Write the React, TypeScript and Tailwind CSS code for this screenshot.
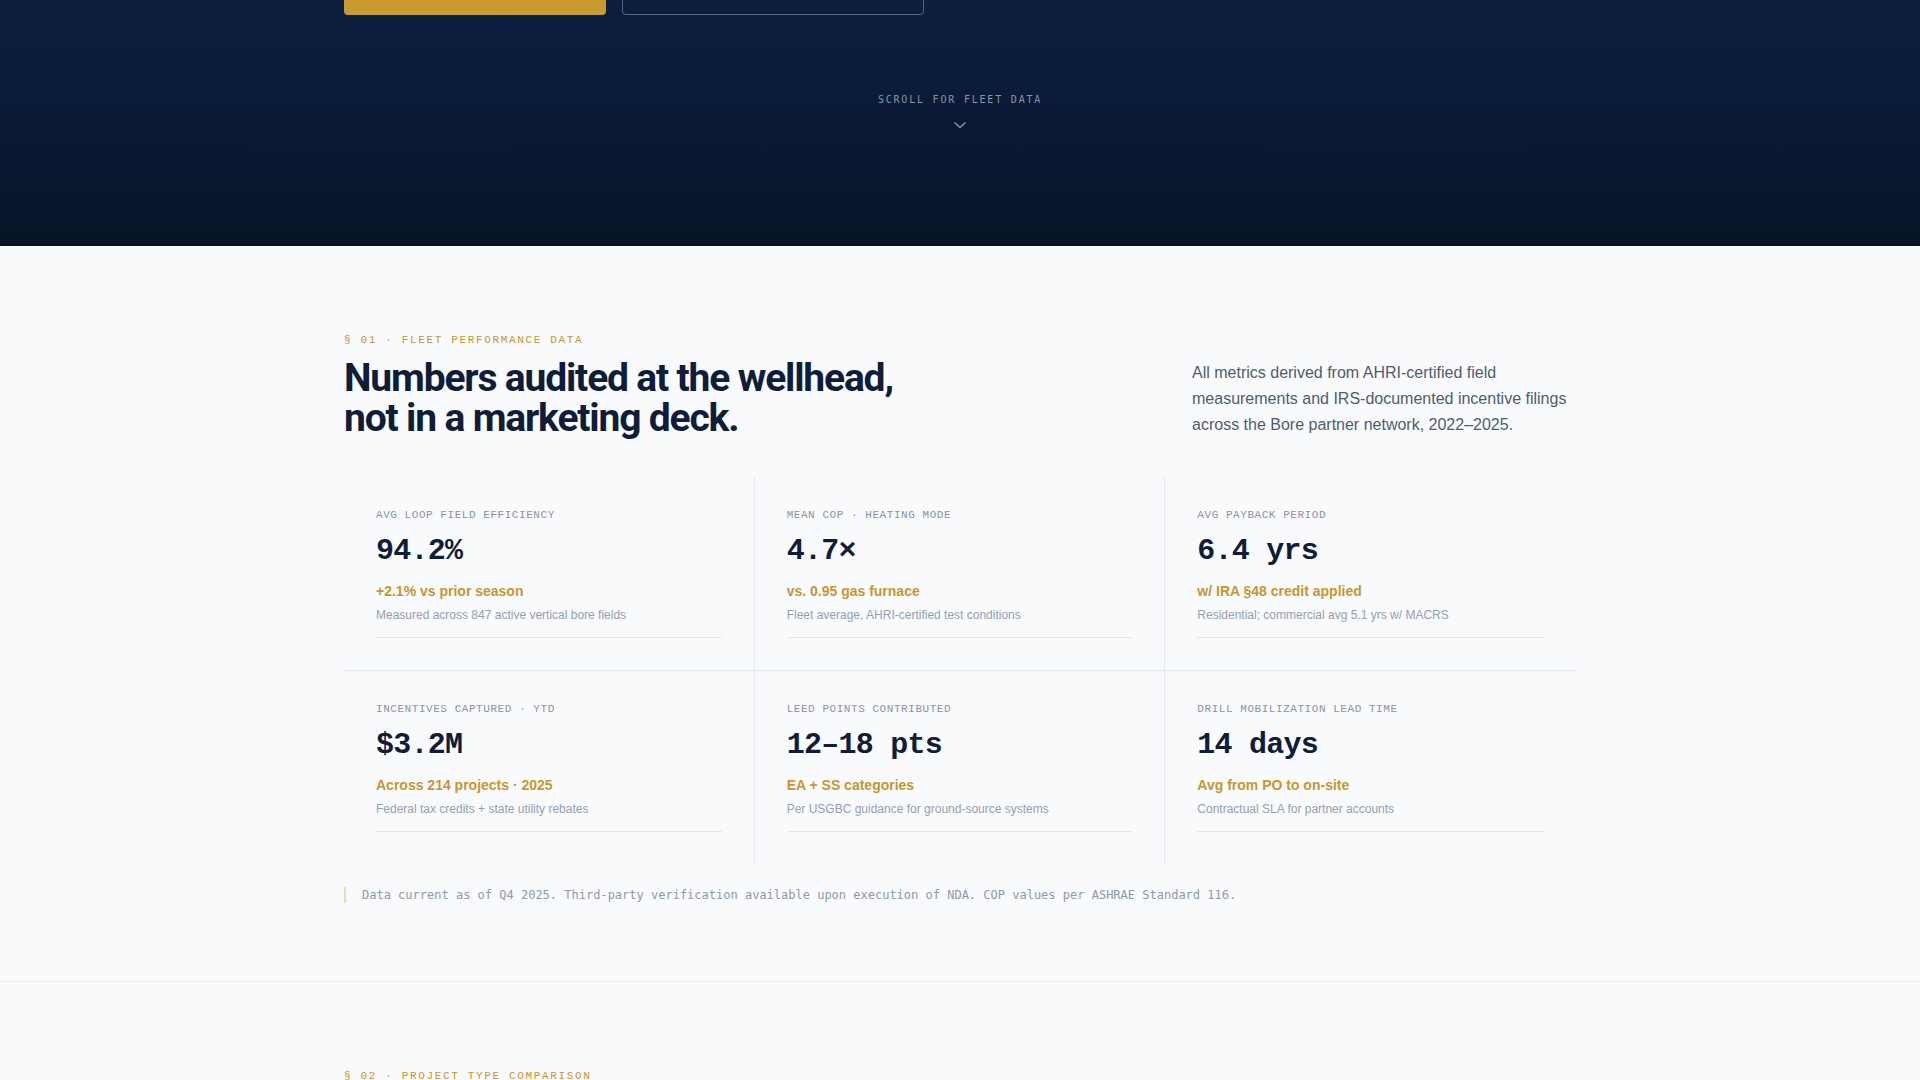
const sans = "font-['Liberation_Sans',Arial,sans-serif]";
const mono = "font-['Liberation_Mono','Courier_New',monospace]";
const display = "font-['Roboto','Liberation_Sans',sans-serif]";

type Metric = {
  label: string;
  value: string;
  delta: string;
  note: string;
};

const metrics: Metric[] = [
  {
    label: "Avg loop field efficiency",
    value: "94.2%",
    delta: "+2.1% vs prior season",
    note: "Measured across 847 active vertical bore fields",
  },
  {
    label: "Mean COP · Heating mode",
    value: "4.7×",
    delta: "vs. 0.95 gas furnace",
    note: "Fleet average, AHRI-certified test conditions",
  },
  {
    label: "Avg payback period",
    value: "6.4 yrs",
    delta: "w/ IRA §48 credit applied",
    note: "Residential; commercial avg 5.1 yrs w/ MACRS",
  },
  {
    label: "Incentives captured · YTD",
    value: "$3.2M",
    delta: "Across 214 projects · 2025",
    note: "Federal tax credits + state utility rebates",
  },
  {
    label: "LEED points contributed",
    value: "12–18 pts",
    delta: "EA + SS categories",
    note: "Per USGBC guidance for ground-source systems",
  },
  {
    label: "Drill mobilization lead time",
    value: "14 days",
    delta: "Avg from PO to on-site",
    note: "Contractual SLA for partner accounts",
  },
];

// grid lines: right edge on the first two columns, bottom edge on the first row
const cellBorders = [
  "border-r border-b",
  "border-r border-b",
  "border-b",
  "border-r",
  "border-r",
  "",
];

const Eyebrow = ({ children }: { children: React.ReactNode }) => (
  <p className={`${mono} text-[11px] leading-4 uppercase tracking-[0.15em] text-[#c9962e]`}>
    {children}
  </p>
);

const MetricCell = ({ m, borders }: { m: Metric; borders: string }) => (
  <div className={`border-[#e5e9ef] px-8 pt-8 pb-8 ${borders}`}>
    <div className="border-b border-[#e2e7ee] pb-3">
      <p className={`${mono} text-[11px] leading-3 uppercase tracking-[0.05em] text-[#8a94a4]`}>
        {m.label}
      </p>
      <p className={`${mono} mt-3 text-[30px] leading-9 font-bold tracking-tight text-[#0f1d3a]`}>
        {m.value}
      </p>
      <p className={`${sans} mt-3 text-sm leading-5 font-bold text-[#c8962f]`}>{m.delta}</p>
      <p className={`${sans} mt-1 text-xs leading-5 text-[#94a0b2]`}>{m.note}</p>
    </div>
  </div>
);

const Hero = () => (
  <section className="h-[246px] overflow-hidden bg-gradient-to-b from-[#0c1f3f] via-[#0a1a35] to-[#071426]">
    <div className="mx-auto max-w-7xl px-6">
      <div className={`${sans} -mt-[37px] flex gap-4`}>
        <button className="flex h-[52px] w-[262px] items-center justify-center rounded bg-[#c99a30] text-[15px] font-bold text-[#0f1d3a]">
          Request fleet report
        </button>
        <button className="flex h-[52px] w-[302px] items-center justify-center rounded border border-[#55657f] text-[15px] text-slate-200">
          View project map
        </button>
      </div>
      <div className="mt-[79px] flex flex-col items-center">
        <span className="font-['DejaVu_Sans_Mono',monospace] text-[10px] leading-3 uppercase tracking-[0.18em] text-[#8796ad]">
          Scroll for fleet data
        </span>
        <svg className="mt-[13px]" width="14" height="12" viewBox="0 0 14 12" fill="none">
          <path d="M1.5 3.5 L7 8.5 L12.5 3.5" stroke="#8796ad" strokeWidth="1.4" />
        </svg>
      </div>
    </div>
  </section>
);

const FleetData = () => (
  <section className="border-b border-[#e8ecf1] bg-[#f8fafc] pt-[86px] pb-[78px]">
    <div className="mx-auto max-w-7xl px-6">
      <div className="flex items-end justify-between">
        <div>
          <Eyebrow>§ 01 · Fleet performance data</Eyebrow>
          <h2 className={`${display} mt-[10px] max-w-[600px] text-[39px] leading-[40px] font-bold tracking-[-0.03em] text-[#0f1d3a]`}>
            Numbers audited at the wellhead,
            <br />
            not in a marketing deck.
          </h2>
        </div>
        <p className={`${sans} max-w-sm text-base leading-[26px] text-[#4f5d73]`}>
          All metrics derived from AHRI-certified field measurements and IRS-documented incentive
          filings across the Bore partner network, 2022–2025.
        </p>
      </div>

      <div className="mt-[39px] grid grid-cols-3">
        {metrics.map((m, i) => (
          <MetricCell key={m.label} m={m} borders={cellBorders[i]} />
        ))}
      </div>

      <p className="mt-[23px] border-l-2 border-[#ecdcb8] pl-4 font-['DejaVu_Sans_Mono',monospace] text-xs leading-4 text-[#8e99aa]">
        Data current as of Q4 2025. Third-party verification available upon execution of NDA. COP
        values per ASHRAE Standard 116.
      </p>
    </div>
  </section>
);

const ProjectTypes = () => (
  <section className="bg-[#f8fafc] pt-[86px] pb-20">
    <div className="mx-auto max-w-7xl px-6">
      <Eyebrow>§ 02 · Project type comparison</Eyebrow>
      <h2 className={`${display} mt-[10px] max-w-[600px] text-[39px] leading-[40px] font-bold tracking-[-0.03em] text-[#0f1d3a]`}>
        Residential, commercial and district loops side by side.
      </h2>
    </div>
  </section>
);

export default function App() {
  return (
    <div className="min-h-screen bg-[#f8fafc]">
      <Hero />
      <FleetData />
      <ProjectTypes />
    </div>
  );
}
